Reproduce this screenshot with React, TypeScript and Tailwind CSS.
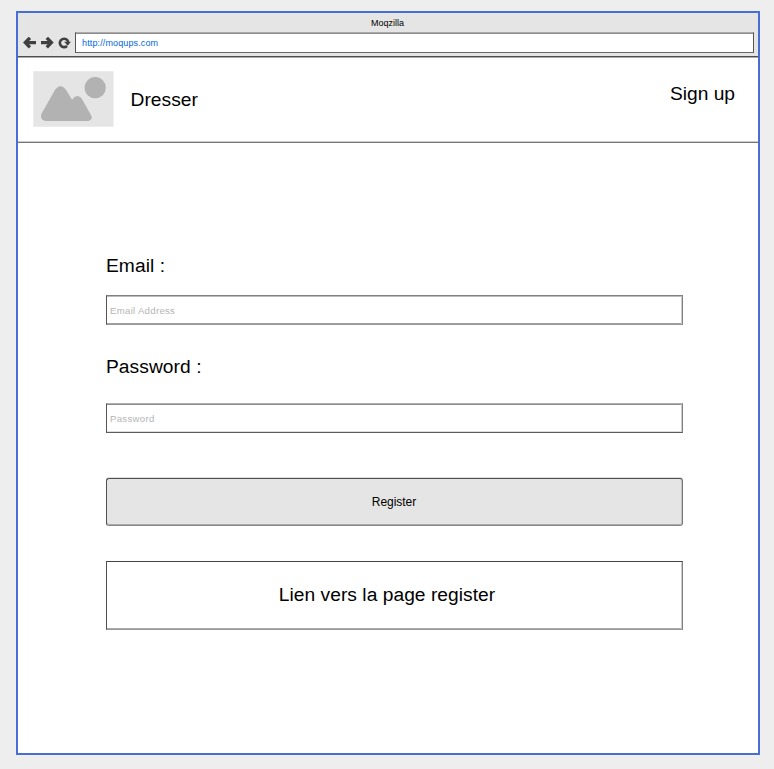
function ArrowLeft() {
  return (
    <svg width="13" height="12" viewBox="0.3 0.2 13 12" fill="none" stroke="#404040" strokeWidth="3.3">
      <path d="M7.200 1L2.600 5.800l4.600 4.800M2.800 5.800H13.300" />
    </svg>
  );
}

function ArrowRight() {
  return (
    <svg width="13" height="12" viewBox="0.2 0.2 13 12" fill="none" stroke="#404040" strokeWidth="3.3">
      <path d="M6 1l4.600 4.800L6 10.600M10.400 5.800H.2" />
    </svg>
  );
}

function Reload() {
  return (
    <svg width="13" height="12" viewBox="0 0 13 12">
      <path d="M9 9A4.200 4.200 0 1 1 10.200 5" fill="none" stroke="#404040" strokeWidth="2.6" />
      <path d="M6.100 4.800H12.900L9.700 8.700Z" fill="#404040" />
    </svg>
  );
}

function Picture() {
  return (
    <svg className="mt-[13px] ml-[15px] shrink-0" width="81" height="56" viewBox="0 0 81 56">
      <path d="M.3.3H80.5V55.7H.3Z" fill="#e5e5e5" />
      <circle cx="62.2" cy="16.7" r="10.6" fill="#b2b2b2" />
      <path
        d="M22.2 18.5Q27.5 11.5 32.8 18.5L39 28.7Q43.500 22.2 48.500 27.300L57.700 43.500C60.500 47.500 57.500 50 54 50H13.500C8.500 50 6.500 46 9.200 41.600Z"
        fill="#b2b2b2"
      />
    </svg>
  );
}

export default function App() {
  return (
    <div className="h-[769px] w-[774px] bg-[#eeeeee] pt-[11px] pl-4 font-['Liberation_Sans',Arial,sans-serif] text-black">
      <div className="flex h-[744px] w-[744px] flex-col border-2 border-[#486ed5] bg-white">
        <header className="h-[45px] shrink-0 border-b border-[#aaaaaa] bg-[#e5e5e5]">
          <div className="h-11 border-b border-[#4d4d4d]">
            <div className="h-[19px] pt-[5px] pr-px text-center text-[9px] leading-[10px]">Moqzilla</div>
            <div className="flex h-[21px] items-center pr-1 pl-[5px]">
              <ArrowLeft />
              <span className="w-[5px]" />
              <ArrowRight />
              <span className="w-[4px]" />
              <Reload />
              <div className="ml-[4px] h-[21px] flex-1 border border-t-[#aaaaaa] border-r-[#555555] border-b-[#666666] border-l-[#555555] bg-white pl-[6px] text-[9px] leading-[20px] tracking-[0.13px] text-[#0066dd] shadow-[inset_0_1px_0_#8c8c8c]">
                http://moqups.com
              </div>
            </div>
          </div>
        </header>
        <nav className="flex h-[85px] shrink-0 border-b border-[#777777] text-[19.2px] leading-[22px] shadow-[inset_0_-1px_0_#cccccc]">
          <Picture />
          <span className="mt-[31px] ml-[16.5px] tracking-[0.05px]">Dresser</span>
          <span className="mt-[25px] mr-[23px] ml-auto">Sign up</span>
        </nav>
        <main className="flex flex-col pt-[112px] pr-[75px] pl-[88px] text-[19.2px] leading-[22px]">
          <label htmlFor="email" className="tracking-[0.07px]">Email :</label>
          <input
            id="email"
            placeholder="Email Address"
            className="mt-[18px] h-[30px] border border-t-[#808080] border-r-[#808080] border-b-[#999999] border-l-[#555555] pt-[1px] pl-[3px] text-[9.6px] tracking-[0.3px] shadow-[inset_-1px_0_0_#cccccc,inset_0_1px_0_#bbbbbb,inset_0_-1px_0_#a0a0a0] outline-none placeholder:text-[#b5b5b5]"
          />
          <label htmlFor="password" className="mt-[31px] tracking-[0.07px]">Password :</label>
          <input
            id="password"
            placeholder="Password"
            className="mt-[25px] h-[30px] border border-t-[#b0b0b0] border-r-[#808080] border-b-[#5c5c5c] border-l-[#555555] pl-[3px] text-[9.6px] tracking-[0.3px] shadow-[inset_-1px_0_0_#cccccc,inset_0_1px_0_#8c8c8c,inset_0_-1px_0_#dddddd] outline-none placeholder:text-[#b5b5b5]"
          />
          <button className="mt-[45px] h-[48px] rounded-[3px] border border-t-[#505050] border-r-[#777777] border-b-[#888888] border-l-[#505050] bg-[#e5e5e5] pr-[1px] text-[12px] leading-[14px] tracking-[-0.05px] shadow-[inset_-1px_0_0_#c4c4c4,inset_0_-1px_0_#aaaaaa,0_-1px_0_#dddddd]">
            Register
          </button>
          <div className="mt-[35px] flex h-[69px] items-center justify-center border border-t-[#444444] border-r-[#808080] border-b-[#999999] border-l-[#505050] pr-[15px] pb-[2px] tracking-[0.04px] shadow-[inset_-1px_0_0_#cccccc,inset_0_-1px_0_#aaaaaa]">
            Lien vers la page register
          </div>
        </main>
      </div>
    </div>
  );
}
